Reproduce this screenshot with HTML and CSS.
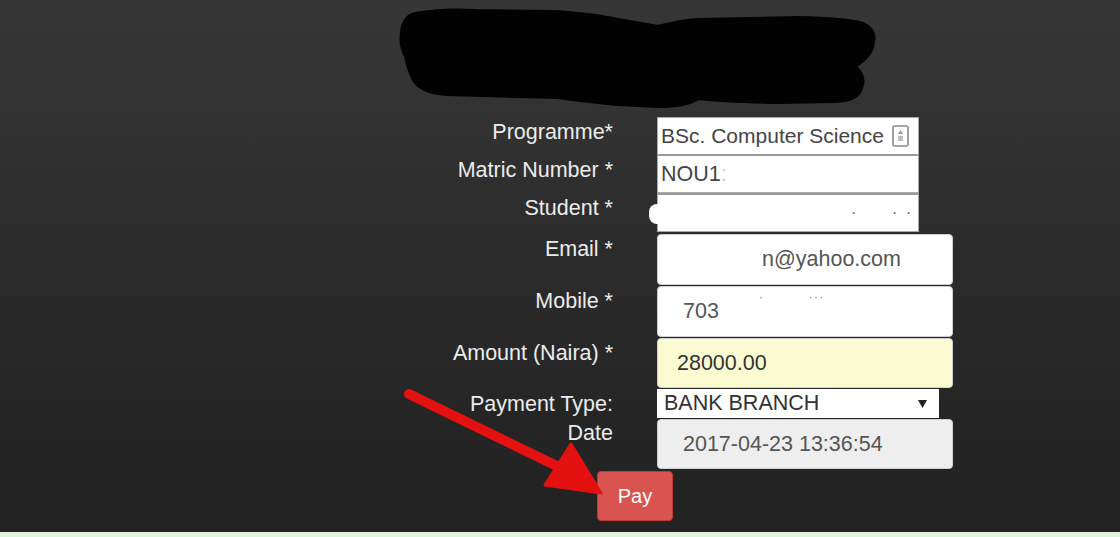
FILE: index.html
```html
<!DOCTYPE html>
<html>
<head>
<meta charset="utf-8">
<link rel="stylesheet" href="styles.css">
</head>
<body>
<div class="page">
  <div class="redacted">
    <svg width="482" height="104" viewBox="0 0 482 104">
      <path d="M6 26 Q8 10 20 8 Q45 3 80 5 L160 6 Q200 9 222 14 L262 21 Q285 15 302 14 L402 12 Q450 13 467 18 Q480 24 477 36 Q476 50 458 60 Q470 70 465 82 Q462 94 440 95 L382 96 Q330 95 302 92 Q290 100 262 100 L222 98 Q190 95 162 91 L50 88 Q25 86 18 74 Q12 62 10 50 Q4 40 6 26 Z" fill="#020202" stroke="#020202" stroke-width="4" stroke-linejoin="round"/>
    </svg>
  </div>
  <form class="form">
    <label class="lbl">Programme*</label>
    <div class="field f-prog">
      <span>BSc. Computer Science</span>
      <svg class="spin" width="17" height="22" viewBox="0 0 17 22"><rect x="1" y="1" width="15" height="20" rx="2" fill="#fff" stroke="#8a8a8a" stroke-width="1.6"/><path d="M8.5 5 L11 9 L6 9 Z" fill="#9a9a9a"/><rect x="6" y="11" width="5" height="5" fill="#bdbdbd"/></svg>
    </div>

    <label class="lbl">Matric Number *</label>
    <div class="field f-sq f-matric"><span>NOU1</span><span class="ghost">:</span></div>

    <label class="lbl">Student *</label>
    <div class="field f-sq f-student"><span class="blob"></span><span class="dots">·&nbsp;&nbsp;&nbsp;&nbsp;&nbsp;&nbsp;&nbsp;&nbsp;·&nbsp;&nbsp;·</span></div>

    <label class="lbl">Email *</label>
    <div class="field f-big f-email"><span>n@yahoo.com</span></div>

    <label class="lbl">Mobile *</label>
    <div class="field f-big f-mobile"><span>703</span><span class="ghost2">˙&nbsp;&nbsp;&nbsp;&nbsp;&nbsp;&nbsp;&nbsp;&nbsp;&nbsp;&nbsp;˙˙˙</span></div>

    <label class="lbl">Amount (Naira) *</label>
    <div class="field f-big f-amount"><span>28000.00</span></div>

    <label class="lbl">Payment Type:</label>
    <div class="field f-pay"><span>BANK BRANCH</span><svg width="9" height="8" viewBox="0 0 9 8"><path d="M0 0 L9 0 L4.5 8 Z" fill="#222"/></svg></div>

    <label class="lbl">Date</label>
    <div class="field f-big f-date"><span>2017-04-23 13:36:54</span></div>

    <div class="actions"><button type="button" class="pay">Pay</button></div>
  </form>
  <svg class="arrow" width="220" height="120" viewBox="0 0 220 120">
    <path d="M9 9 L165 85" stroke="#e3110f" stroke-width="10" stroke-linecap="round"/>
    <path d="M201 108 L145 100 L171 59 Z" fill="#e3110f" stroke="#e3110f" stroke-width="3" stroke-linejoin="round"/>
  </svg>
</div>
<div class="strip"></div>
</body>
</html>
```
FILE: styles.css
```css
html, body {
  margin: 0;
  padding: 0;
}
body {
  width: 1120px;
  height: 537px;
  overflow: hidden;
  font-family: "Liberation Sans", Arial, sans-serif;
  background: #222;
}
.page {
  position: relative;
  height: 531px;
  padding-top: 6px;
  box-sizing: border-box;
  background: linear-gradient(to bottom, #363636 0%, #333 18%, #2c2c2c 45%, #252525 80%, #222 100%);
}
.redacted {
  margin-left: 396px;
  height: 104px;
}
.redacted svg {
  display: block;
}
.form {
  margin-top: 7px;
  display: grid;
  grid-template-columns: 613px auto;
  column-gap: 44px;
  align-items: start;
}
.lbl {
  text-align: right;
  color: #ececec;
  font-size: 21.5px;
  line-height: 28px;
  padding-top: 1px;
}
.field {
  box-sizing: border-box;
  display: flex;
  align-items: center;
  background: #fff;
  font-size: 21.5px;
  color: #555;
  position: relative;
}
.f-prog {
  width: 262px;
  height: 38px;
  border: 1px solid #a9a9a9;
  padding-left: 3px;
  color: #444;
  font-size: 21px;
  justify-content: space-between;
  padding-right: 9px;
}
.spin {
  display: block;
}
.f-sq {
  width: 262px;
  height: 39px;
  border: 1px solid #a9a9a9;
  border-top: 2px solid #9a9a9a;
  padding-left: 3px;
}
.f-matric {
  color: #444;
  margin-top: -1px;
}
.ghost {
  color: #cfcfcf;
}
.f-student {
  margin-bottom: 2px;
}
.blob {
  position: absolute;
  left: -9px;
  top: 9px;
  width: 16px;
  height: 20px;
  border-radius: 9px;
  background: #fff;
}
.dots {
  margin-left: 190px;
  color: #666;
  font-size: 16px;
}
.f-big {
  width: 296px;
  height: 51px;
  border: 1px solid #cfcfcf;
  border-radius: 4px;
  margin-bottom: 1px;
}
.f-email {
  padding-left: 104px;
}
.f-mobile {
  padding-left: 25px;
}
.ghost2 {
  color: #999;
  font-size: 16px;
  margin-left: 40px;
  margin-top: -16px;
}
.f-amount {
  background: #fbfbd2;
  padding-left: 19px;
  color: #333;
  height: 50px;
}
.f-pay {
  width: 282px;
  height: 29px;
  padding-left: 7px;
  padding-right: 12px;
  justify-content: space-between;
  color: #333;
  border-radius: 0;
}
.f-date {
  margin-top: 1px;
  background: #eeeeee;
  padding-left: 25px;
  height: 50px;
}
.actions {
  grid-column: 1 / span 2;
  padding-left: 597px;
  padding-top: 1px;
}
.pay {
  display: block;
  width: 76px;
  height: 50px;
  background: #d9534f;
  border: 1px solid #b93c38;
  border-radius: 4px;
  color: #fff;
  font-family: "Liberation Sans", Arial, sans-serif;
  font-size: 20px;
  padding: 0;
}
.arrow {
  position: absolute;
  left: 400px;
  top: 385px;
}
.strip {
  height: 6px;
  background: #e4f1dc;
  border-top: 1px solid #1c2a1c;
  box-sizing: border-box;
}
```
